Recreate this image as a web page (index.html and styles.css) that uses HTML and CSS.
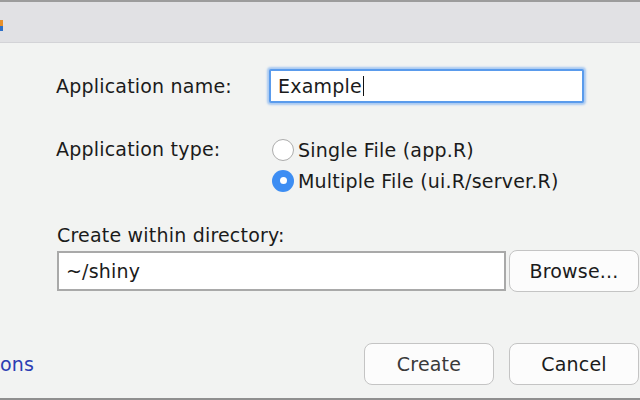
FILE: index.html
```html
<!DOCTYPE html>
<html>
<head>
<meta charset="utf-8">
<link rel="stylesheet" href="styles.css">
</head>
<body>
<div class="window">
  <div class="titlebar"><span class="ticon"></span></div>
  <div class="content">
    <div class="row name-row">
      <div class="lbl">Application name:</div>
      <div class="field focus"><span>Example</span><span class="caret"></span></div>
    </div>
    <div class="row type-row">
      <div class="lbl type-lbl">Application type:</div>
      <div class="radios">
        <div class="radio"><span class="dot"></span><span>Single File (app.R)</span></div>
        <div class="radio"><span class="dot on"></span><span>Multiple File (ui.R/server.R)</span></div>
      </div>
    </div>
    <div class="dir-lbl">Create within directory:</div>
    <div class="dir-row">
      <div class="field dir">~/shiny</div>
      <div class="btn browse">Browse...</div>
    </div>
  </div>
  <div class="footer">
    <span class="link">ons</span>
    <div class="actions">
      <div class="btn create">Create</div>
      <div class="btn cancel">Cancel</div>
    </div>
  </div>
</div>
</body>
</html>
```
FILE: styles.css
```css
html, body {
  margin: 0;
  padding: 0;
}
body {
  width: 640px;
  height: 400px;
  overflow: hidden;
  background: #f2f3f2;
  font-family: "DejaVu Sans", "Noto Sans", sans-serif;
  font-size: 19px;
  letter-spacing: 0.2px;
  color: #1b1b1b;
}
.window {
  width: 640px;
  height: 400px;
  box-sizing: border-box;
  display: flex;
  flex-direction: column;
  border-bottom: 2px solid #8f8f8f;
}
.titlebar {
  height: 40px;
  border-top: 2px solid #9c9c9c;
  border-bottom: 1px solid #d3d3d7;
  background: #e1e1e4;
  display: flex;
  align-items: flex-start;
}
.ticon {
  width: 3px;
  height: 11px;
  margin-top: 18px;
  background: linear-gradient(#e8902a 0 55%, #2d6fc8 55% 100%);
}
.content {
  display: flex;
  flex-direction: column;
  padding: 0 1px 0 56px;
}
.row {
  display: flex;
}
.lbl {
  width: 213px;
  flex: none;
}
.name-row {
  margin-top: 26px;
  height: 34px;
  align-items: center;
}
.field {
  box-sizing: border-box;
  background: #ffffff;
  display: flex;
  align-items: center;
}
.focus {
  width: 315px;
  height: 34px;
  border: 2px solid #5a9bec;
  box-shadow: 0 0 2px 2px rgba(110, 165, 240, 0.55);
  border-radius: 2px;
  padding-left: 7px;
}
.caret {
  width: 1px;
  height: 20px;
  background: #111;
  margin-left: 1px;
}
.type-row {
  margin-top: 31px;
}
.type-lbl {
  line-height: 31px;
}
.radios {
  display: flex;
  flex-direction: column;
  margin-left: 3px;
}
.radio {
  height: 31px;
  display: flex;
  align-items: center;
  gap: 4px;
}
.dot {
  box-sizing: border-box;
  width: 22px;
  height: 22px;
  border-radius: 50%;
  border: 1.5px solid #acacac;
  background: #ffffff;
  flex: none;
  display: flex;
  align-items: center;
  justify-content: center;
}
.dot.on {
  border: none;
  background: #3d8df3;
}
.dot.on::after {
  content: "";
  width: 7px;
  height: 7px;
  border-radius: 50%;
  background: #ffffff;
}
.dir-lbl {
  margin-top: 28px;
  margin-left: 1px;
  line-height: 22px;
}
.dir-row {
  display: flex;
  align-items: center;
  gap: 3px;
  height: 42px;
  margin-top: 4px;
  margin-left: 1px;
}
.dir {
  width: 449px;
  height: 40px;
  border: 2px solid #a9a9a9;
  padding-left: 7px;
}
.btn {
  box-sizing: border-box;
  height: 42px;
  border: 1px solid #c4c4c4;
  border-radius: 8px;
  background: #fcfcfc;
  display: flex;
  align-items: center;
  justify-content: center;
}
.browse {
  width: 130px;
}
.footer {
  margin-top: 51px;
  display: flex;
  justify-content: space-between;
  align-items: center;
  padding-right: 1px;
}
.link {
  color: #2b3db3;
}
.actions {
  display: flex;
  gap: 15px;
}
.create {
  width: 130px;
  color: #3a3a3a;
}
.cancel {
  width: 130px;
}
```
